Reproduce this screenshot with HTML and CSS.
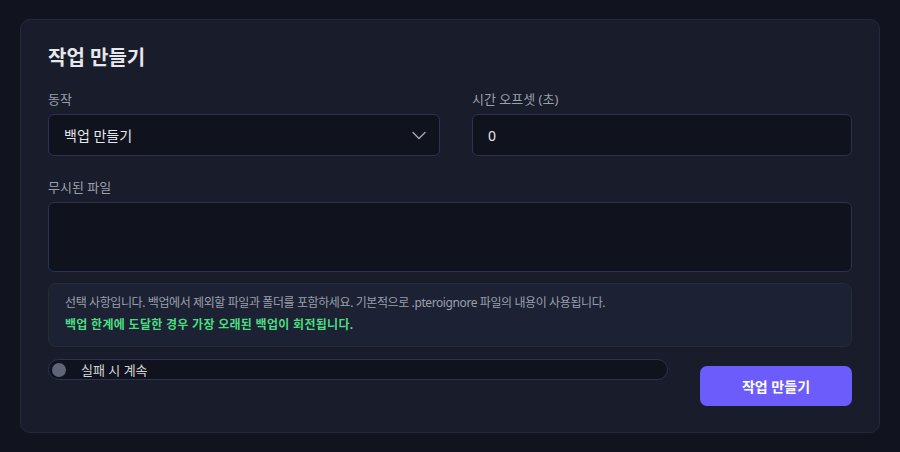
FILE: index.html
```html
<!DOCTYPE html>
<html lang="ko">
<head>
    <meta charset="UTF-8">
    <meta name="viewport" content="width=device-width, initial-scale=1.0">
    <title>작업 만들기</title>
    <link rel="stylesheet" href="styles.css">
</head>
<body>

<div class="card">
    <h2 class="card-title">작업 만들기</h2>

    <div class="row">
        <div class="field">
            <label class="field-label">동작</label>
            <div class="select">
                <span>백업 만들기</span>
                <svg class="chevron" width="16" height="16" viewBox="0 0 16 16">
                    <path d="M2 5.5 L8 11.5 L14 5.5" fill="none" stroke="#9ca3af" stroke-width="1.5" stroke-linecap="round" stroke-linejoin="round"/>
                </svg>
            </div>
        </div>
        <div class="field">
            <label class="field-label">시간 오프셋 (초)</label>
            <div class="input">0</div>
        </div>
    </div>

    <div class="field">
        <label class="field-label">무시된 파일</label>
        <div class="textarea"></div>
    </div>

    <div class="info">
        <p class="info-text">선택 사항입니다. 백업에서 제외할 파일과 폴더를 포함하세요. 기본적으로 .pteroignore 파일의 내용이 사용됩니다.</p>
        <p class="info-note">백업 한계에 도달한 경우 가장 오래된 백업이 회전됩니다.</p>
    </div>

    <div class="footer">
        <div class="toggle">
            <span class="knob"></span>
            <span class="toggle-label">실패 시 계속</span>
        </div>
        <button class="submit">작업 만들기</button>
    </div>
</div>

</body>
</html>
```

FILE: styles.css
```css
body {
    margin: 0;
    padding: 19px 20px;
    background-color: #11141f;
    font-family: 'Noto Sans', 'Noto Sans CJK KR', sans-serif;
    color: #e5e7eb;
}

.card {
    background-color: #181c2b;
    border: 1px solid #232a3d;
    border-radius: 10px;
    padding: 24px 27px 26px;
}

.card-title {
    margin: 0 0 17px;
    font-size: 20px;
    line-height: 28px;
    font-weight: 700;
    color: #e5e7eb;
}

.row {
    display: grid;
    grid-template-columns: 392fr 380fr;
    gap: 32px;
    margin-bottom: 21px;
}

.field-label {
    display: block;
    font-size: 13px;
    line-height: 20px;
    color: #9aa0ab;
    margin-bottom: 5px;
}

.select,
.input,
.textarea {
    box-sizing: border-box;
    background-color: #10131d;
    border: 1px solid #2b3350;
    border-radius: 6px;
    font-size: 14px;
    color: #e5e7eb;
}

.select,
.input {
    height: 42px;
    display: flex;
    align-items: center;
    padding: 0 15px;
}

.select {
    justify-content: space-between;
    padding-right: 12px;
}

.textarea {
    height: 70px;
}

.info {
    margin-top: 11px;
    background-color: #1c2134;
    border: 1px solid #262d32;
    border-radius: 8px;
    padding: 8px 16px 10px;
}

.info p {
    margin: 0;
    font-size: 12px;
    line-height: 22px;
}

.info-text {
    color: #9aa0ab;
    letter-spacing: -0.4px;
}

.info-note {
    color: #4ade80;
    font-weight: 700;
    letter-spacing: 0.3px;
}

.footer {
    display: flex;
    gap: 32px;
    margin-top: 12px;
}

.toggle {
    flex: 1;
    box-sizing: border-box;
    height: 21px;
    display: flex;
    align-items: center;
    background-color: #10131d;
    border: 1px solid #2b3350;
    border-radius: 11px;
    padding-left: 3px;
}

.knob {
    width: 14px;
    height: 14px;
    border-radius: 50%;
    background-color: #5f6577;
}

.toggle-label {
    margin-left: 15px;
    font-size: 13px;
    color: #d1d5db;
}

.submit {
    width: 152px;
    height: 40px;
    margin-top: 7px;
    background-color: #6b5cfb;
    border: none;
    border-radius: 7px;
    color: #fff;
    font-family: inherit;
    font-size: 14px;
    font-weight: 700;
    cursor: pointer;
}
```
